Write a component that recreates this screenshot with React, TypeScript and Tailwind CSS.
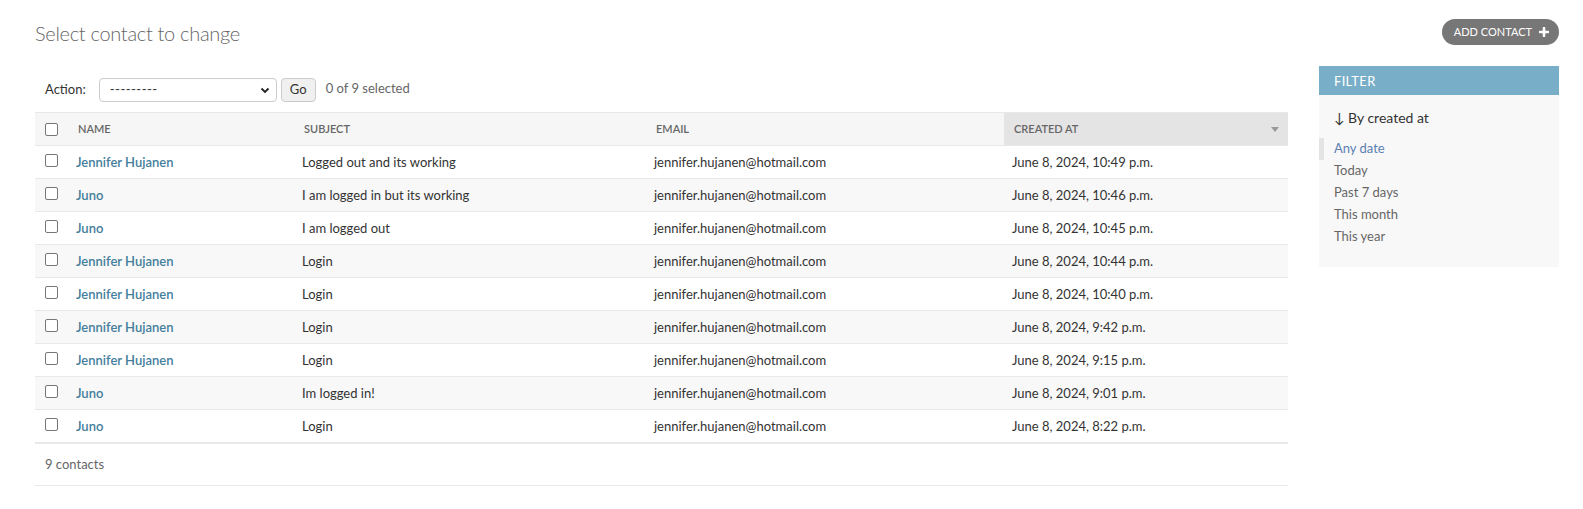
const rows = [
  { name: "Jennifer Hujanen", subject: "Logged out and its working", created: "June 8, 2024, 10:49 p.m." },
  { name: "Juno", subject: "I am logged in but its working", created: "June 8, 2024, 10:46 p.m." },
  { name: "Juno", subject: "I am logged out", created: "June 8, 2024, 10:45 p.m." },
  { name: "Jennifer Hujanen", subject: "Login", created: "June 8, 2024, 10:44 p.m." },
  { name: "Jennifer Hujanen", subject: "Login", created: "June 8, 2024, 10:40 p.m." },
  { name: "Jennifer Hujanen", subject: "Login", created: "June 8, 2024, 9:42 p.m." },
  { name: "Jennifer Hujanen", subject: "Login", created: "June 8, 2024, 9:15 p.m." },
  { name: "Juno", subject: "Im logged in!", created: "June 8, 2024, 9:01 p.m." },
  { name: "Juno", subject: "Login", created: "June 8, 2024, 8:22 p.m." },
];

const filters = ["Any date", "Today", "Past 7 days", "This month", "This year"];

function Checkbox() {
  return <span className="block w-[13px] h-[13px] border border-[#767676] rounded-[2px] bg-white" />;
}

export default function App() {
  return (
    <div className="min-h-[509px] bg-white pl-[35px] pr-[24px] pt-[19px] text-[13px] text-[#333] font-['Lato','Liberation_Sans',sans-serif]">
      <div className="flex items-center justify-between h-[26px]">
        <h1 className="text-[20px] font-light text-[#666] leading-[24px] mt-[1px] tracking-[-0.3px]">Select contact to change</h1>
        <a className="flex items-center gap-[7px] h-[26px] pl-[12px] pr-[10px] rounded-full bg-[#777] text-white text-[11px] uppercase">
          ADD CONTACT
          <svg width="10" height="10" viewBox="0 0 10 10">
            <path d="M5 1v8M1 5h8" stroke="white" strokeWidth="2.6" strokeLinecap="round" />
          </svg>
        </a>
      </div>

      <div className="flex mt-[21px]">
        <div className="flex-1 pt-[12px]">
          <div className="flex items-center h-[24px] pl-[10px]">
            <span className="text-[#333] mr-[13px]">Action:</span>
            <div className="flex items-center justify-between w-[178px] h-[24px] border border-[#ccc] rounded-[4px] pl-[10px] pr-[5px]">
              <span className="text-[#333] tracking-[0.5px]">---------</span>
              <svg width="12" height="12" viewBox="0 0 12 12">
                <path d="M2.5 4.5 6 8l3.5-3.5" fill="none" stroke="#222" strokeWidth="1.8" />
              </svg>
            </div>
            <button className="ml-[4px] w-[35px] h-[24px] border border-[#ccc] rounded-[4px] bg-[#f0f0f0] text-[#333] text-[13px]">Go</button>
            <span className="ml-[10px] text-[#666] -mt-[3px]">0 of 9 selected</span>
          </div>

          <table className="mt-[10px] w-full border-collapse table-fixed">
            <colgroup>
              <col className="w-[33px]" />
              <col className="w-[226px]" />
              <col className="w-[352px]" />
              <col className="w-[358px]" />
              <col />
            </colgroup>
            <thead>
              <tr className="h-[33px] bg-[#f6f6f6] border-t border-b border-[#e8e8e8] text-[11px] text-[#666] font-semibold uppercase text-left">
                <th className="pl-[10px]"><Checkbox /></th>
                <th className="pl-[10px] font-semibold">Name</th>
                <th className="pl-[10px] font-semibold">Subject</th>
                <th className="pl-[10px] font-semibold">Email</th>
                <th className="pl-[10px] font-semibold bg-[#e4e4e4]">
                  <div className="flex items-center justify-between pr-[9px]">
                    <span>Created at</span>
                    <svg width="8" height="5" viewBox="0 0 8 5">
                      <path d="M0 0h8L4 5z" fill="#999" />
                    </svg>
                  </div>
                </th>
              </tr>
            </thead>
            <tbody>
              {rows.map((r, i) => (
                <tr key={i} className={`h-[33px] border-b border-[#e8e8e8] ${i % 2 === 1 ? "bg-[#f8f8f8]" : "bg-white"}`}>
                  <td className="pl-[10px] align-top pt-[8px]"><Checkbox /></td>
                  <td className="pl-[8px] pt-[1px] font-semibold text-[#447e9b]">{r.name}</td>
                  <td className="pl-[8px] pt-[1px]">{r.subject}</td>
                  <td className="pl-[8px] pt-[1px]">jennifer.hujanen@hotmail.com</td>
                  <td className="pl-[8px] pt-[1px]">{r.created}</td>
                </tr>
              ))}
            </tbody>
          </table>

          <div className="h-[43px] flex items-center pl-[10px] border-t border-b border-[#e8e8e8] text-[#666]">9 contacts</div>
        </div>

        <div className="w-[240px] ml-[31px] self-start bg-[#f8f8f8]">
          <h2 className="h-[29px] flex items-center pt-[3px] pl-[15px] bg-[#79aec8] text-white text-[13px] tracking-[0.3px] uppercase">Filter</h2>
          <div className="pt-[13px] pb-[19px]">
            <h3 className="pl-[15px] text-[14px] text-[#333] leading-[20px]">↓ By created at</h3>
            <ul className="mt-[10px]">
              {filters.map((f, i) => (
                <li
                  key={f}
                  className={`h-[22px] flex items-center pl-[10px] border-l-[5px] ${i === 0 ? "border-[#e4e4e4] text-[#5b80b2]" : "border-transparent text-[#666]"}`}
                >
                  {f}
                </li>
              ))}
            </ul>
          </div>
        </div>
      </div>
    </div>
  );
}
